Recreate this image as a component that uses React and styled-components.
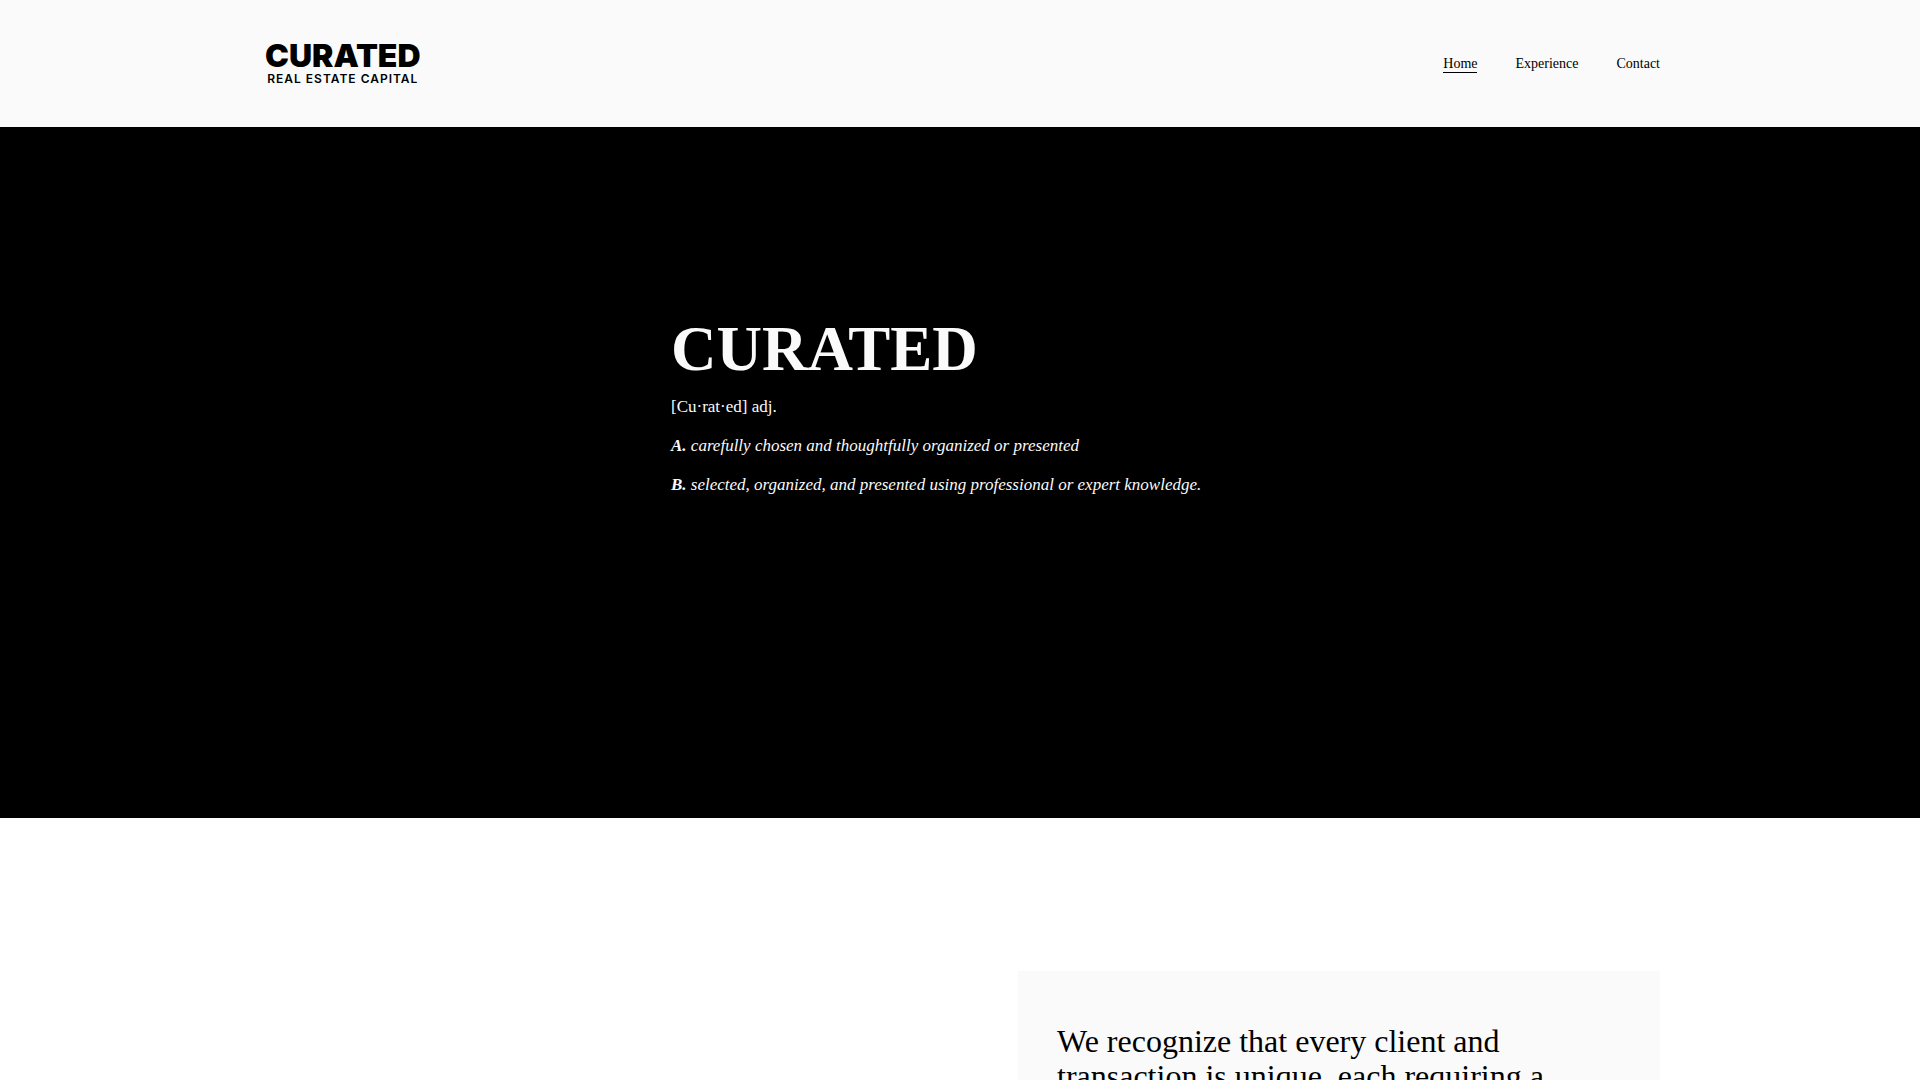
import styled, { createGlobalStyle } from "styled-components";

const GlobalStyle = createGlobalStyle`
  * {
    box-sizing: border-box;
  }

  body {
    margin: 0;
    background: #ffffff;
    color: #000000;
    font-family: "Liberation Serif", "Times New Roman", serif;
  }
`;

const Header = styled.header`
  background: #fafafa;
  padding: 40px 4vw;
`;

const HeaderInner = styled.div`
  display: flex;
  align-items: center;
  justify-content: space-between;
  max-width: 1400px;
  height: 47px;
  margin: 0 auto;
`;

const Logo = styled.a`
  display: flex;
  flex-direction: column;
  align-items: center;
  padding-left: 5px;
  color: #000000;
  font-family: Inter, "Liberation Sans", sans-serif;
  text-decoration: none;
`;

const LogoName = styled.span`
  font-size: 32px;
  font-weight: 900;
  line-height: 30px;
`;

const LogoTagline = styled.span`
  font-size: 12px;
  font-weight: 600;
  letter-spacing: 1px;
  line-height: 16px;
`;

const Nav = styled.nav`
  display: flex;
  gap: 38px;
`;

const NavLink = styled.a`
  border-bottom: 1px solid ${({ $active }) => ($active ? "#000000" : "transparent")};
  color: #000000;
  font-size: 14px;
  line-height: 17px;
  text-decoration: none;
`;

const Hero = styled.section`
  display: flex;
  justify-content: center;
  min-height: 64vh;
  padding: 184px 4vw;
  background: #000000;
  color: #fafafa;
`;

const Definition = styled.div`
  width: 578px;
`;

const Title = styled.h1`
  margin: 0 0 6px;
  font-size: 63px;
  font-weight: 700;
  line-height: 76px;
`;

const Text = styled.p`
  margin: 0 0 12px;
  font-size: 17px;
  font-style: ${({ $italic }) => ($italic ? "italic" : "normal")};
  line-height: 27px;
`;

const Approach = styled.section`
  padding: 153px 4vw 0;
`;

const ApproachInner = styled.div`
  display: flex;
  justify-content: flex-end;
  max-width: 1400px;
  margin: 0 auto;
`;

const Card = styled.article`
  width: 642px;
  padding: 53px 39px;
  background: #fafafa;
`;

const CardTitle = styled.h2`
  max-width: 500px;
  margin: 0;
  font-size: 32px;
  font-weight: 400;
  line-height: 35px;
`;

const links = ["Home", "Experience", "Contact"];

const definitions = [
  { mark: "A.", text: "carefully chosen and thoughtfully organized or presented" },
  { mark: "B.", text: "selected, organized, and presented using professional or expert knowledge." },
];

const App = () => {
  return (
    <>
      <GlobalStyle />
      <Header>
        <HeaderInner>
          <Logo href="#home">
            <LogoName>CURATED</LogoName>
            <LogoTagline>REAL ESTATE CAPITAL</LogoTagline>
          </Logo>
          <Nav>
            {links.map((link) => (
              <NavLink key={link} href={`#${link.toLowerCase()}`} $active={link === "Home"}>
                {link}
              </NavLink>
            ))}
          </Nav>
        </HeaderInner>
      </Header>
      <main>
        <Hero>
          <Definition>
            <Title>CURATED</Title>
            <Text>[Cu·rat·ed] adj.</Text>
            {definitions.map(({ mark, text }) => (
              <Text key={mark} $italic>
                <strong>{mark}</strong> {text}
              </Text>
            ))}
          </Definition>
        </Hero>
        <Approach>
          <ApproachInner>
            <Card>
              <CardTitle>
                We recognize that every client and transaction is unique, each requiring a
              </CardTitle>
            </Card>
          </ApproachInner>
        </Approach>
      </main>
    </>
  );
};

export default App;
